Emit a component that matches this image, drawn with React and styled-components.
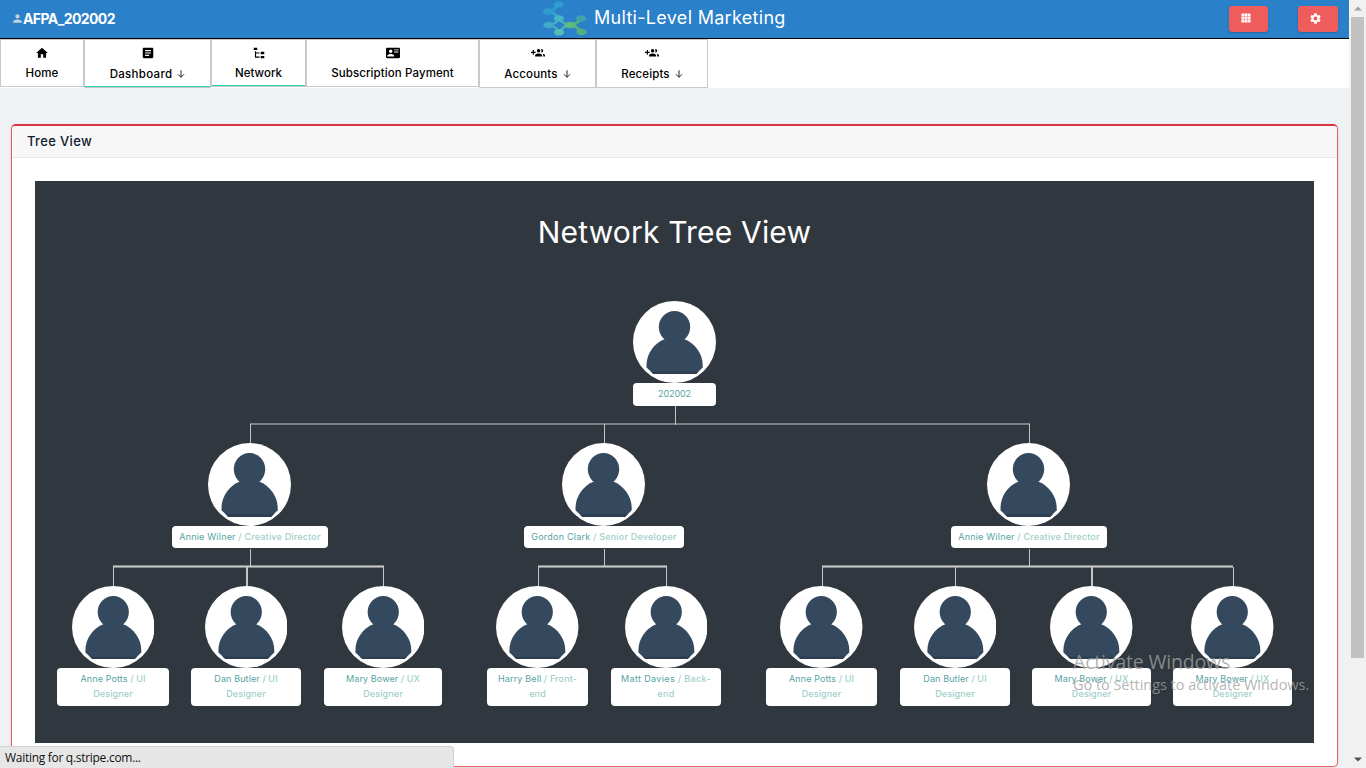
import React from 'react';
import styled, { createGlobalStyle } from 'styled-components';
import { MdPerson, MdSettings } from 'react-icons/md';

const GlobalStyle = createGlobalStyle`
  * { box-sizing: border-box; }
  body { margin: 0; overflow: hidden; background: #eef2f5; font-family: Inter, "Liberation Sans", sans-serif; }
`;

const Screen = styled.div`
  position: relative;
  display: flex;
  width: 1366px;
  height: 768px;
  overflow: hidden;
  background: #eef2f5;
`;

const Page = styled.div`
  width: 1349px;
  height: 768px;
  flex: none;
  display: flex;
  flex-direction: column;
`;

const Header = styled.header`
  height: 39px;
  flex: none;
  display: grid;
  grid-template-columns: 543px 1fr 120px;
  background: #2a80c9;
  border-bottom: 1px solid #000;
  color: #fff;
`;

const User = styled.div`
  display: flex;
  align-items: center;
  height: 36px;
  padding-left: 11px;
  font-size: 14px;
  font-weight: 700;
  letter-spacing: -0.6px;
  svg { width: 13px; height: 13px; margin-right: -1px; color: #c9d3dc; }
`;

const Brand = styled.div`
  display: flex;
  align-items: center;
  height: 36px;
  gap: 7px;
  font-size: 18px;
  font-weight: 400;
  letter-spacing: 0.3px;
  line-height: 34px;
  white-space: nowrap;
  svg { display: block; flex: none; margin-top: 1px; }
`;

const Actions = styled.div`
  display: flex;
  gap: 30px;
  padding-top: 6px;
`;

const ActionButton = styled.button`
  width: ${(p) => p.$width}px;
  height: 26px;
  padding: 0 6px 2px 0;
  display: flex;
  align-items: center;
  justify-content: center;
  border: 0;
  border-radius: 3px;
  background: #ef5c5c;
  color: #fff;
  box-shadow: 0 1px 2px rgba(0, 0, 0, 0.2);
`;

const Nav = styled.nav`
  display: flex;
  align-items: flex-start;
  height: 49px;
  flex: none;
  background: #fff;
`;

const Tab = styled.a`
  width: ${(p) => p.$width}px;
  height: ${(p) => p.$height}px;
  flex: none;
  display: flex;
  flex-direction: column;
  align-items: center;
  padding-top: 6px;
  border: 1px solid #c9c9c9;
  box-shadow: ${(p) => (p.$active ? 'inset 0 -1px #1fd3b5' : 'none')};
  color: #000;
`;

const TabText = styled.span`
  display: flex;
  align-items: center;
  gap: 5px;
  margin-top: ${(p) => (p.$menu ? 7 : 6)}px;
  line-height: 14px;
  font-size: 11.5px;
  font-weight: 500;
  letter-spacing: ${(p) => p.$spacing}px;
  white-space: nowrap;
`;

const Main = styled.main`
  flex: 1;
  padding: 36px 11px 0;
`;

const Card = styled.section`
  height: 643px;
  border: 1px solid #ef5b5d;
  border-top: 2px solid #dc3545;
  border-radius: 5px;
  overflow: hidden;
  background: #fff;
  box-shadow: 0 1px 3px rgba(0, 0, 0, 0.12);
`;

const CardTitle = styled.h2`
  height: 32px;
  margin: 0;
  padding-left: 15px;
  line-height: 31px;
  background: #f7f7f7;
  border-bottom: 1px solid #e6e6e6;
  font-size: 13px;
  font-weight: 500;
  letter-spacing: 0.35px;
  color: #10202e;
`;

const Canvas = styled.div`
  position: relative;
  width: 1279px;
  height: 562px;
  margin: 23px 0 0 23px;
  padding-top: 31px;
  background: #30373f;
`;

const CanvasTitle = styled.h1`
  margin: 0;
  text-align: center;
  color: #fff;
  font-size: 30px;
  line-height: 40px;
  font-weight: 400;
  letter-spacing: 0.18px;
`;

const Links = styled.svg`
  position: absolute;
  left: 0;
  top: 0;
`;

const Node = styled.div`
  position: absolute;
  left: ${(p) => p.$x - 35}px;
  top: ${(p) => p.$y - 181}px;
  width: ${(p) => p.$width}px;
  display: flex;
  flex-direction: column;
  align-items: center;
`;

const Portrait = styled.svg`
  display: block;
  flex: none;
  width: ${(p) => p.$width}px;
  height: ${(p) => p.$height}px;
  margin-right: ${(p) => p.$shift}px;
`;

const NodeLabel = styled.div`
  width: 100%;
  height: ${(p) => p.$height}px;
  padding-top: ${(p) => p.$pad}px;
  border-radius: 4px;
  background: #fff;
  color: #56a3a3;
  text-align: center;
  font-size: 9px;
  line-height: 15px;
  letter-spacing: ${(p) => p.$spacing}px;
  white-space: nowrap;
`;

const Role = styled.span`
  color: #9ecfca;
  font-weight: 500;
`;

const ScrollBar = styled.aside`
  width: 17px;
  height: 768px;
  display: flex;
  flex-direction: column;
  align-items: center;
  justify-content: space-between;
  background: #f1f1f1;
`;

const ScrollThumb = styled.div`
  width: 13px;
  height: 641px;
  margin-bottom: auto;
  background: #c1c1c1;
`;

const ScrollArrow = styled.div`
  height: 17px;
  width: 17px;
  display: flex;
  align-items: center;
  justify-content: center;
`;

const StatusBar = styled.div`
  position: absolute;
  left: 0;
  bottom: 0;
  width: 454px;
  height: 22px;
  padding-left: 5px;
  line-height: 22px;
  border-top: 1px solid #d2d2d2;
  border-right: 1px solid #d2d2d2;
  border-top-right-radius: 4px;
  background: #e6e6e6;
  color: #111;
  font-family: "Open Sans", "Noto Sans", sans-serif;
  font-size: 12px;
  letter-spacing: -0.29px;
`;

const Watermark = styled.div`
  position: absolute;
  left: 1073px;
  top: 649px;
  color: rgba(160, 160, 160, 0.78);
  font-family: "Open Sans", "Noto Sans", sans-serif;
  white-space: nowrap;
`;

const WatermarkTitle = styled.div`
  font-size: 19.5px;
  line-height: 26px;
  letter-spacing: -0.18px;
`;

const WatermarkText = styled.div`
  font-size: 14.5px;
  line-height: 20px;
  letter-spacing: -0.04px;
`;

const ICONS = {
  home: 'M10,20V14H14V20H19V12H22L12,3L2,12H5V20H10Z',
  article: 'M19 3H5c-1.1 0-2 .9-2 2v14c0 1.1.9 2 2 2h14c1.1 0 2-.9 2-2V5c0-1.1-.9-2-2-2zM14 17H7v-2h7v2zm3-4H7v-2h10v2zm0-4H7V7h10v2z',
  tree: 'M3,3H9V7H3V3M15,10H21V14H15V10M15,17H21V21H15V17M13,13H7V18H13V20H7L5,20V9H7V11H13V13Z',
  card: 'M2,3H22C23.05,3 24,3.95 24,5V19C24,20.05 23.05,21 22,21H2C.95,21 0,20.05 0,19V5C0,3.95.95,3 2,3M14,6V7H22V6H14M14,8V9H21.5L22,9V8H14M14,10V11H21V10H14M8,13.91C6,13.91 2,15 2,17V18H14V17C14,15 10,13.91 8,13.91M8,6A3,3 0 0,0 5,9A3,3 0 0,0 8,12A3,3 0 0,0 11,9A3,3 0 0,0 8,6Z',
  group: 'M13,13C11,13 7,14 7,16V18H19V16C19,14 15,13 13,13M19.62,13.16C20.45,13.88 21,14.82 21,16V18H24V16C24,14.46 21.63,13.5 19.62,13.16M13,11A3,3 0 0,0 16,8A3,3 0 0,0 13,5A3,3 0 0,0 10,8A3,3 0 0,0 13,11M18,11A3,3 0 0,0 21,8A3,3 0 0,0 18,5C17.68,5 17.37,5.05 17.08,5.14C17.65,5.95 18,6.94 18,8C18,9.06 17.65,10.04 17.08,10.85C17.37,10.95 17.68,11 18,11M8,10H5V7H3V10H0V12H3V15H5V12H8V10Z',
};

const TABS = [
  { label: 'Home', icon: 'home', width: 84, spacing: 0.1 },
  { label: 'Dashboard', icon: 'article', width: 127, menu: true, active: true, spacing: 0.3 },
  { label: 'Network', icon: 'tree', width: 95, active: true, spacing: 0 },
  { label: 'Subscription Payment', icon: 'card', width: 173, spacing: 0.1 },
  { label: 'Accounts', icon: 'group', width: 117, menu: true, spacing: 0.15 },
  { label: 'Receipts', icon: 'group', width: 112, menu: true, spacing: 0.1 },
];

const NODES = [
  { x: 633, y: 301, width: 83, name: '202002', spacing: -0.1 },
  { x: 172, y: 443, width: 156, name: 'Annie Wilner', role: 'Creative Director', spacing: 0.2 },
  { x: 524, y: 443, width: 160, name: 'Gordon Clark', role: 'Senior Developer', spacing: 0.22 },
  { x: 951, y: 443, width: 156, name: 'Annie Wilner', role: 'Creative Director', spacing: 0.2 },
  { x: 57, y: 586, width: 112, name: 'Anne Potts', role: 'UI', rest: 'Designer', spacing: 0.12 },
  { x: 191, y: 586, width: 110, name: 'Dan Butler', role: 'UI', rest: 'Designer', spacing: 0.12 },
  { x: 324, y: 586, width: 118, name: 'Mary Bower', role: 'UX', rest: 'Designer', spacing: 0.1 },
  { x: 487, y: 586, width: 101, name: 'Harry Bell', role: 'Front-', rest: 'end', spacing: 0.15 },
  { x: 611, y: 586, width: 110, name: 'Matt Davies', role: 'Back-', rest: 'end', spacing: 0.35 },
  { x: 766, y: 586, width: 111, name: 'Anne Potts', role: 'UI', rest: 'Designer', spacing: 0.12 },
  { x: 900, y: 586, width: 110, name: 'Dan Butler', role: 'UI', rest: 'Designer', spacing: 0.12 },
  { x: 1032, y: 586, width: 119, name: 'Mary Bower', role: 'UX', rest: 'Designer', spacing: 0.1 },
  { x: 1173, y: 586, width: 119, name: 'Mary Bower', role: 'UX', rest: 'Designer', spacing: 0.1 },
];

/* label height, label top padding, avatar size and right-hand margin for each level of the tree */
const LEVELS = {
  301: { label: 23, pad: 3, width: 83, height: 82, shift: 0 },
  443: { label: 22, pad: 3, width: 83, height: 83, shift: 1 },
  586: { label: 38, pad: 3, width: 82.5, height: 82, shift: 0.5 },
};

/* [x, y, width, height] of the connector strokes */
const STEMS = [
  [675, 406, 1, 19], [250, 424, 1, 19], [604, 424, 1, 19], [1029, 424, 1, 19],
  [250, 549, 1, 18], [604, 549, 1, 18], [1029, 549, 1, 18],
  [113, 567, 1, 20], [246, 567, 2, 20], [383, 567, 1, 20],
  [538, 567, 1, 20], [666, 567, 1, 20],
  [822, 567, 1, 20], [955, 567, 1, 20], [1091, 567, 2, 20], [1233, 567, 1, 20],
];
const BARS = [[113, 271], [538, 129], [822, 411]];

function Avatar({ level }) {
  return (
    <Portrait $width={level.width} $height={level.height} $shift={level.shift} viewBox="0 0 83 82" preserveAspectRatio="none">
      <ellipse cx="41.5" cy="41" rx="41.5" ry="41" fill="#fff" />
      <g fill="#34495e">
        <ellipse cx="41.5" cy="26" rx="15.7" ry="16" />
        <path d="M32 38H51C62 42 69.7 53 69.7 64V66.5L63 73H20.5L13.5 66.5V64C13.5 53 21 42 32 38Z" />
      </g>
      <path d="M17.5 70.5H65.8L63 73H20.5Z" fill="#2c3e50" />
    </Portrait>
  );
}

function Logo() {
  return (
    <svg width="44" height="35" viewBox="0 0 44 35">
      <g fill="none" strokeWidth="3" strokeLinecap="round">
        <path d="M14 5Q12 9 6 10.500" stroke="#2e9bcb" />
        <path d="M6 11Q13 12 15 16.500" stroke="#36a5c9" />
        <path d="M6 24Q13 23 15 18.500M17 18.500Q20 23 27 24M15 30.500Q13 25 6 24M17 30.500Q20 25 27 24" stroke="#48b0bd" strokeWidth="2.500" />
        <path d="M27 24Q34 23 37 18.500M27 24Q34 25 37 30" stroke="#54b17c" />
      </g>
      <ellipse cx="15.500" cy="3.500" rx="5" ry="3" fill="#2e9fcb" />
      <ellipse cx="5" cy="10.500" rx="5" ry="3.300" fill="#2f9ccc" />
      <ellipse cx="16" cy="17.500" rx="5" ry="3.300" fill="#46b6c3" />
      <ellipse cx="5.500" cy="24" rx="5.200" ry="3.300" fill="#42a9c8" />
      <ellipse cx="16" cy="31.300" rx="5" ry="3.300" fill="#55bdb6" />
      <ellipse cx="38" cy="17.500" rx="5" ry="3.300" fill="#42a2ac" />
      <ellipse cx="38.500" cy="31" rx="5.200" ry="3.300" fill="#53af83" />
      <ellipse cx="27" cy="24" rx="5.500" ry="3.300" fill="#5cbc80" />
    </svg>
  );
}

function DownArrow() {
  return (
    <svg width="8" height="8" viewBox="0 0 8 8" fill="none" stroke="#222" strokeWidth="1">
      <path d="M4 0.300V7.200M1 4.300L4 7.300L7 4.300" />
    </svg>
  );
}

function GridIcon() {
  return (
    <svg width="10" height="10" viewBox="0 0 10 10">
      <rect x="0.500" y="0.500" width="9" height="9" fill="#fff" />
      <path d="M3.500 0V10M6.500 0V10M0 3.500H10M0 6.500H10" stroke="#f2a0a4" strokeWidth="0.800" />
    </svg>
  );
}

export default function App() {
  return (
    <Screen>
      <GlobalStyle />
      <Page>
        <Header>
          <User><MdPerson />AFPA_202002</User>
          <Brand><Logo />Multi-Level Marketing</Brand>
          <Actions>
            <ActionButton $width={39}><GridIcon /></ActionButton>
            <ActionButton $width={40}><MdSettings size={13} /></ActionButton>
          </Actions>
        </Header>
        <Nav>
          {TABS.map((t) => (
            <Tab key={t.label} $width={t.width} $height={t.menu ? 49 : 48} $active={t.active}>
              <svg width="14" height="14" viewBox="0 0 24 24">
                <path d={ICONS[t.icon]} fillRule="evenodd" />
              </svg>
              <TabText $menu={t.menu} $spacing={t.spacing}>{t.label}{t.menu && <DownArrow />}</TabText>
            </Tab>
          ))}
        </Nav>
        <Main>
          <Card>
            <CardTitle>Tree View</CardTitle>
            <Canvas>
              <CanvasTitle>Network Tree View</CanvasTitle>
              <Links width="1279" height="562" viewBox="35 181 1279 562" shapeRendering="crispEdges">
                <rect x="250" y="423" width="780" height="2" fill="#7b8084" />
                {BARS.map(([x, w]) => (
                  <g key={x}>
                    <rect x={x} y="565" width={w} height="3" fill="#85898d" />
                    <rect x={x} y="566" width={w} height="1" fill="#c6c8ca" />
                  </g>
                ))}
                {STEMS.map(([x, y, w, h]) => (
                  <rect key={`${x}-${y}`} x={x} y={y} width={w} height={h} fill="#c3c5c8" />
                ))}
              </Links>
              {NODES.map((n) => (
                <Node key={`${n.x}-${n.y}`} $x={n.x} $y={n.y} $width={n.width}>
                  <Avatar level={LEVELS[n.y]} />
                  <NodeLabel $height={LEVELS[n.y].label} $pad={LEVELS[n.y].pad} $spacing={n.spacing}>
                    {n.name}
                    {n.role && <Role> / {n.role}</Role>}
                    {n.rest && <><br /><Role>{n.rest}</Role></>}
                  </NodeLabel>
                </Node>
              ))}
            </Canvas>
          </Card>
        </Main>
      </Page>
      <ScrollBar>
        <ScrollArrow>
          <svg width="8" height="5" viewBox="0 0 8 5"><path d="M0 4.500L4 0.500L8 4.500Z" fill="#a3a3a3" /></svg>
        </ScrollArrow>
        <ScrollThumb />
        <ScrollArrow>
          <svg width="8" height="5" viewBox="0 0 8 5"><path d="M0 0.500L4 4.500L8 0.500Z" fill="#505050" /></svg>
        </ScrollArrow>
      </ScrollBar>
      <Watermark>
        <WatermarkTitle>Activate Windows</WatermarkTitle>
        <WatermarkText>Go to Settings to activate Windows.</WatermarkText>
      </Watermark>
      <StatusBar>Waiting for q.stripe.com...</StatusBar>
    </Screen>
  );
}
